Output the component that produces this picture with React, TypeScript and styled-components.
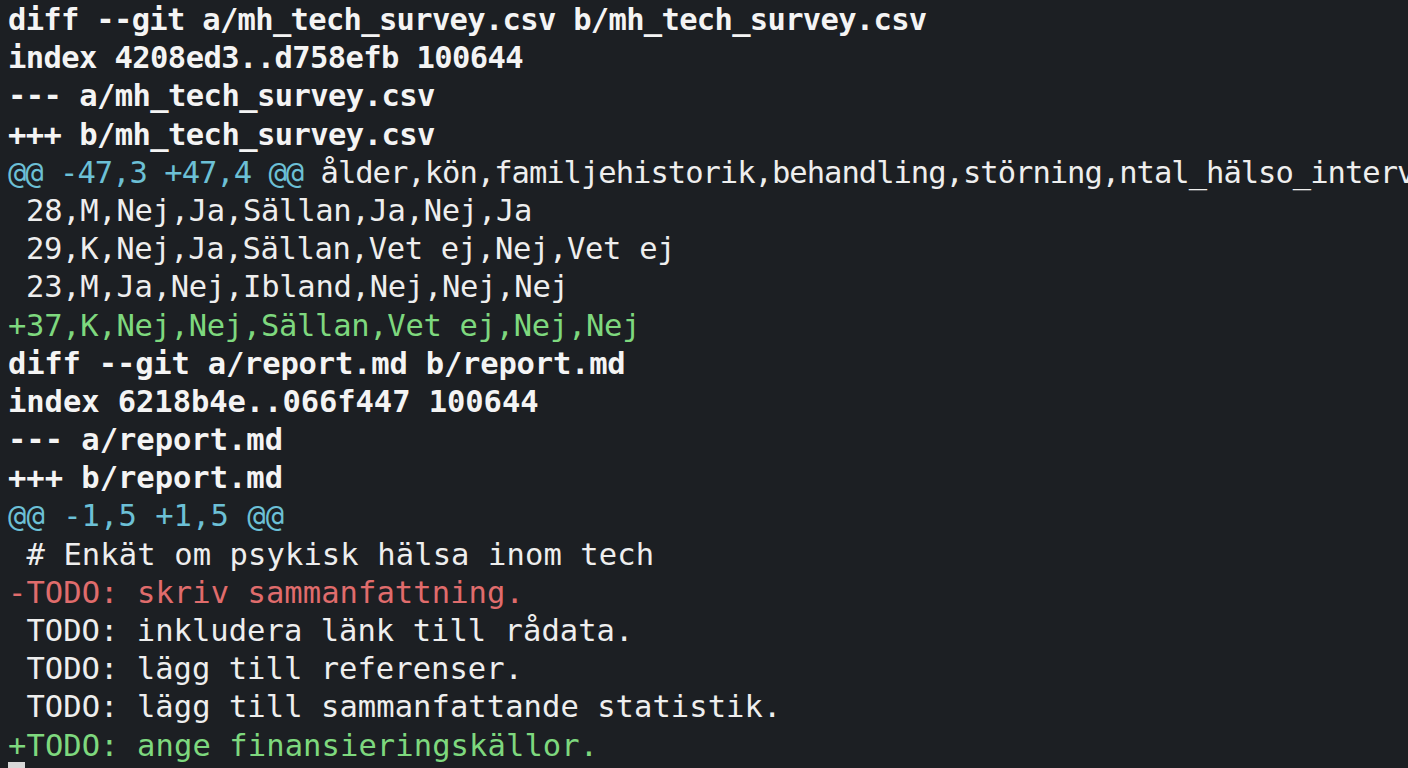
import React from "react";
import styled, { createGlobalStyle } from "styled-components";

const Global = createGlobalStyle`
  html, body {
    margin: 0;
    padding: 0;
    background: #1c1f23;
    overflow: hidden;
  }
  #root { width: 1408px; height: 768px; }
`;

const Terminal = styled.pre`
  margin: 0;
  width: 1408px;
  height: 768px;
  box-sizing: border-box;
  padding: 1px 0 0 8px;
  background: #1c1f23;
  color: #f2f2f2;
  font-family: "DejaVu Sans Mono", "Liberation Mono", monospace;
  font-size: 30.5px;
  line-height: 38.2px;
  overflow: hidden;
  white-space: pre;
`;

type Kind = "meta" | "hunk" | "ctx" | "add" | "del";

const colors: Record<Kind, string> = {
  meta: "#f4f4f4",
  hunk: "#6cc0d6",
  ctx: "#eeeeee",
  add: "#7ed87e",
  del: "#e06c6c",
};

const Line = styled.div<{ $kind: Kind; $track: number }>`
  height: 38.2px;
  color: ${(p) => colors[p.$kind]};
  font-weight: ${(p) => (p.$kind === "meta" ? 700 : 400)};
  letter-spacing: ${(p) => p.$track}px;
`;

const HunkRange = styled.span`
  color: #6cc0d6;
`;

const HunkText = styled.span`
  color: #eeeeee;
`;

const CursorLine = styled.div`
  height: 38.2px;
`;

const Cursor = styled.div`
  width: 17px;
  height: 20px;
  margin-top: -3px;
  background: #d8d8d8;
`;

type Row = { kind: Kind; text: string; extra?: string; track: number };

const rows: Row[] = [
  { kind: "meta", track: -0.7, text: "diff --git a/mh_tech_survey.csv b/mh_tech_survey.csv" },
  { kind: "meta", track: -0.6, text: "index 4208ed3..d758efb 100644" },
  { kind: "meta", track: -0.58, text: "--- a/mh_tech_survey.csv" },
  { kind: "meta", track: -0.58, text: "+++ b/mh_tech_survey.csv" },
  {
    kind: "hunk",
    track: -1.0,
    text: "@@ -47,3 +47,4 @@",
    extra: " ålder,kön,familjehistorik,behandling,störning,ntal_hälso_interventioner",
  },
  { kind: "ctx", track: -0.29, text: " 28,M,Nej,Ja,Sällan,Ja,Nej,Ja" },
  { kind: "ctx", track: -0.33, text: " 29,K,Nej,Ja,Sällan,Vet ej,Nej,Vet ej" },
  { kind: "ctx", track: -0.28, text: " 23,M,Ja,Nej,Ibland,Nej,Nej,Nej" },
  { kind: "add", track: -0.3, text: "+37,K,Nej,Nej,Sällan,Vet ej,Nej,Nej" },
  { kind: "meta", track: -0.2, text: "diff --git a/report.md b/report.md" },
  { kind: "meta", track: -0.07, text: "index 6218b4e..066f447 100644" },
  { kind: "meta", track: -0.03, text: "--- a/report.md" },
  { kind: "meta", track: -0.03, text: "+++ b/report.md" },
  { kind: "hunk", track: 0.04, text: "@@ -1,5 +1,5 @@" },
  { kind: "ctx", track: 0.1, text: " # Enkät om psykisk hälsa inom tech" },
  { kind: "del", track: 0.06, text: "-TODO: skriv sammanfattning." },
  { kind: "ctx", track: 0.03, text: " TODO: inkludera länk till rådata." },
  { kind: "ctx", track: 0.03, text: " TODO: lägg till referenser." },
  { kind: "ctx", track: 0.05, text: " TODO: lägg till sammanfattande statistik." },
  { kind: "add", track: 0.08, text: "+TODO: ange finansieringskällor." },
];

export default function App() {
  return (
    <>
      <Global />
      <Terminal>
        {rows.map((r, i) => (
          <Line key={i} $kind={r.kind} $track={r.track}>
            {r.kind === "hunk" ? (
              <>
                <HunkRange>{r.text}</HunkRange>
                {r.extra && <HunkText>{r.extra}</HunkText>}
              </>
            ) : (
              r.text
            )}
          </Line>
        ))}
        <CursorLine>
          <Cursor />
        </CursorLine>
      </Terminal>
    </>
  );
}
